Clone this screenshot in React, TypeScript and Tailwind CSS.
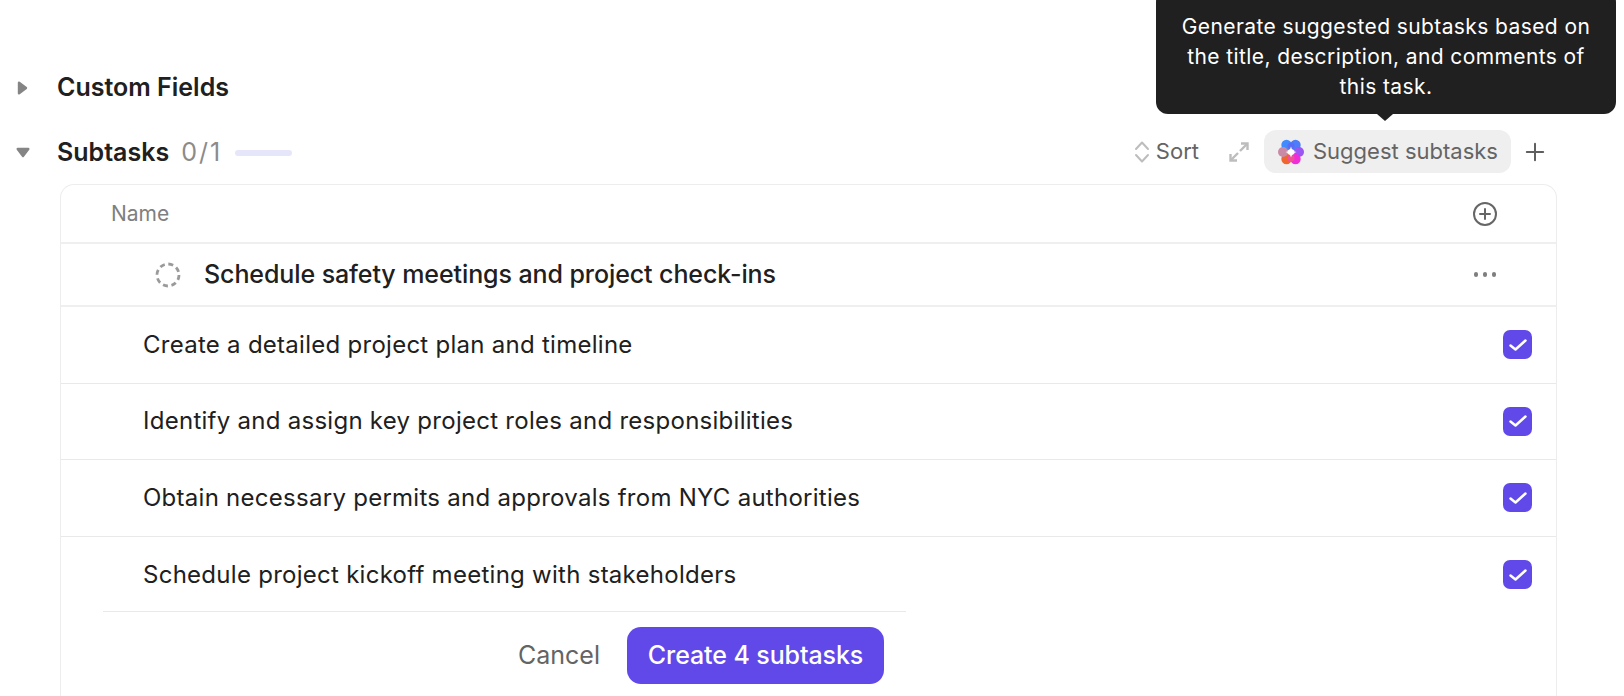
import React from 'react';
import { Plus } from 'lucide-react';

const SUGGESTIONS = [
    'Create a detailed project plan and timeline',
    'Identify and assign key project roles and responsibilities',
    'Obtain necessary permits and approvals from NYC authorities',
    'Schedule project kickoff meeting with stakeholders'
];

// Small rounded triangle used for the section toggles
const Caret = ({ open }: { open: boolean }) => (
    <svg width="16" height="16" viewBox="0 0 16 16" className={open ? 'rotate-90' : ''}>
        <polygon points="4,2.7 11,8 4,13.3" fill="#858585" stroke="#858585" strokeWidth="2.4" strokeLinejoin="round" />
    </svg>
);

// Multi coloured flower for the AI button
const AiFlower = () => (
    <svg width="28" height="28" viewBox="0 0 28 28">
        <defs>
            <filter id="soft" x="-20%" y="-20%" width="140%" height="140%">
                <feGaussianBlur stdDeviation="0.5" />
            </filter>
        </defs>
        <g filter="url(#soft)">
            <circle cx="9.5" cy="7" r="5.2" fill="#3f8cff" />
            <circle cx="18.5" cy="7" r="5.2" fill="#4f7cf8" />
            <circle cx="22" cy="14" r="5" fill="#9a55f2" />
            <circle cx="18.5" cy="21" r="5.2" fill="#f02fd8" />
            <circle cx="9.5" cy="21" r="5.2" fill="#f0662e" />
            <circle cx="6" cy="14" r="5" fill="#c98aa6" />
            <circle cx="14" cy="8" r="3.5" fill="#5a6cf5" />
            <circle cx="14" cy="20" r="3.5" fill="#f0509a" />
        </g>
        <path d="M14 8.4 Q15 13 19.6 14 Q15 15 14 19.6 Q13 15 8.4 14 Q13 13 14 8.4 Z" fill="#fff" />
    </svg>
);

const App: React.FC = () => {
    return (
        <div
            className="relative h-[696px] w-[1624px] overflow-hidden bg-white text-[#202020]"
            style={{ fontFamily: 'Inter, "Liberation Sans", sans-serif' }}
        >
            {/* Tooltip */}
            <div className="absolute left-[1156px] top-[-10px] w-[460px] rounded-[12px] bg-[#202020] pb-[12px] pt-[22px] text-center text-[21px] leading-[30px] tracking-[0.4px] text-white">
                <div>Generate suggested subtasks based on</div>
                <div>the title, description, and comments of</div>
                <div>this task.</div>
                <div className="absolute bottom-[-7px] left-[221px] h-0 w-0 border-l-[8px] border-r-[8px] border-t-[7px] border-l-transparent border-r-transparent border-t-[#202020]" />
            </div>

            <div className="flex flex-col pt-[71px]">
                {/* Custom Fields */}
                <div className="flex h-[34px] items-center">
                    <div className="ml-[15px] flex w-[42px]">
                        <Caret open={false} />
                    </div>
                    <span className="text-[25px] font-semibold">Custom Fields</span>
                </div>

                {/* Subtasks header */}
                <div className="mt-[26px] flex h-[44px] items-center">
                    <div className="ml-[15px] flex w-[42px]">
                        <Caret open />
                    </div>
                    <span className="text-[25px] font-semibold">Subtasks</span>
                    <span className="ml-[12px] text-[25px] tracking-[2px] text-[#8b8b8b]">0/1</span>
                    <div className="ml-[13px] h-[6px] w-[57px] rounded-full bg-[#e6e6fb]" />

                    <div className="-mt-[3px] ml-auto mr-[75px] flex items-center">
                        <svg width="16" height="24" viewBox="0 0 16 24" fill="none" stroke="#bdbdbd" strokeWidth="2" strokeLinecap="round" strokeLinejoin="round">
                            <path d="M2 9 L8 2.5 L14 9" />
                            <path d="M2 15 L8 21.5 L14 15" />
                        </svg>
                        <span className="ml-[6px] text-[22px] text-[#646464]">Sort</span>
                        <svg className="ml-[30px]" width="20" height="20" viewBox="0 0 20 20" fill="none" stroke="#bdbdbd" strokeWidth="2.4">
                            <path d="M11 9 L18 2" />
                            <path d="M12 1.5 H18.5 V8" />
                            <path d="M9 11 L2 18" />
                            <path d="M1.5 12 V18.5 H8" />
                        </svg>
                        <div className="ml-[15px] flex h-[43px] w-[247px] items-center rounded-[12px] bg-[#efefef] pl-[13px]">
                            <AiFlower />
                            <span className="ml-[8px] text-[22px] tracking-[0px] text-[#646464]">Suggest subtasks</span>
                        </div>
                        <Plus className="ml-[10px]" size={28} strokeWidth={1.7} color="#5f5f5f" />
                    </div>
                </div>

                {/* Card */}
                <div className="ml-[60px] mt-[9px] w-[1497px] rounded-t-[14px] border-x border-t border-[#ededed]">
                    <div className="flex h-[59px] items-center justify-between border-b-2 border-[#efefef] pl-[50px] pr-[58px]">
                        <span className="text-[21px] text-[#7f7f7f]">Name</span>
                        <svg width="26" height="26" viewBox="0 0 26 26" fill="none" stroke="#666" strokeWidth="2" strokeLinecap="round">
                            <circle cx="13" cy="13" r="11" />
                            <path d="M13 8 V18 M8 13 H18" />
                        </svg>
                    </div>

                    <div className="flex h-[63px] items-center justify-between border-b-2 border-[#efefef] pl-[94px] pr-[60px]">
                        <div className="flex items-center">
                            <svg width="26" height="26" viewBox="0 0 26 26" fill="none">
                                <circle cx="13" cy="13" r="11" stroke="#9a9a9a" strokeWidth="2.8" strokeDasharray="5 3.64" />
                            </svg>
                            <span className="ml-[23px] text-[25px] font-medium tracking-[-0.09px]">Schedule safety meetings and project check-ins</span>
                        </div>
                        <div className="flex gap-[4.5px]">
                            <span className="h-[4.5px] w-[4.5px] rounded-full bg-[#7f7f7f]" />
                            <span className="h-[4.5px] w-[4.5px] rounded-full bg-[#7f7f7f]" />
                            <span className="h-[4.5px] w-[4.5px] rounded-full bg-[#7f7f7f]" />
                        </div>
                    </div>

                    {SUGGESTIONS.map((text, i) => (
                        <div
                            key={text}
                            className={`flex h-[76.5px] items-center justify-between pl-[82px] pr-[24px] ${i < SUGGESTIONS.length - 1 ? 'border-b border-[#e9e9e9]' : ''}`}
                        >
                            <span className="text-[24px] tracking-[0.27px]">{text}</span>
                            <div className="flex h-[29px] w-[29px] items-center justify-center rounded-[7px] bg-[#6149e9]">
                                <svg width="20" height="16" viewBox="0 0 20 16" fill="none" stroke="#fff" strokeWidth="2.5" strokeLinecap="round" strokeLinejoin="round">
                                    <path d="M2.5 8.5 L7.5 12.5 L17.5 3.5" />
                                </svg>
                            </div>
                        </div>
                    ))}

                    <div className="-mt-[2px] ml-[42px] mr-[650px] flex h-[90px] items-start justify-end border-t border-[#e9e9e9] pr-[22px] pt-[15px]">
                        <button className="mt-[10px] text-[25px] text-[#646464]">Cancel</button>
                        <button className="ml-[27px] flex h-[57px] w-[257px] items-center justify-center rounded-[14px] bg-[#6149e9] text-[25px] font-medium tracking-[-0.1px] text-white">
                            Create 4 subtasks
                        </button>
                    </div>
                </div>
            </div>
        </div>
    );
};

export default App;
